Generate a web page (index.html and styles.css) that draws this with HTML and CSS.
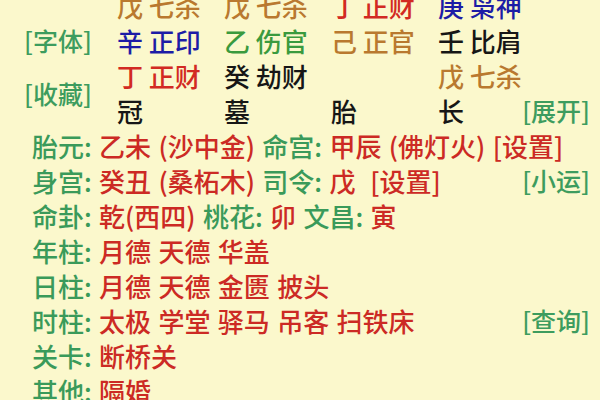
FILE: index.html
```html
<!DOCTYPE html>
<html lang="zh-CN">
<head>
<meta charset="utf-8">
<title>命盘</title>
<link rel="stylesheet" href="styles.css">
</head>
<body>
<div class="page">
  <div class="pillars">
    <div class="cell"></div>
    <div class="cell"><span class="brown">戊 七杀</span></div>
    <div class="cell"><span class="brown">戊 七杀</span></div>
    <div class="cell"><span class="red">丁 正财</span></div>
    <div class="cell"><span class="blue">庚 枭神</span></div>

    <div class="cell side"><span class="link">[字体]</span></div>
    <div class="cell"><span class="blue">辛 正印</span></div>
    <div class="cell"><span class="green">乙 伤官</span></div>
    <div class="cell"><span class="brown">己 正官</span></div>
    <div class="cell"><span class="black">壬 比肩</span></div>

    <div class="cell side tall"><span class="link">[收藏]</span></div>
    <div class="cell"><span class="red">丁 正财</span></div>
    <div class="cell"><span class="black">癸 劫财</span></div>
    <div class="cell"></div>
    <div class="cell"><span class="brown">戊 七杀</span></div>

    <div class="cell"><span class="black">冠</span></div>
    <div class="cell"><span class="black">墓</span></div>
    <div class="cell"><span class="black">胎</span></div>
    <div class="cell split"><span class="black">长</span><span class="link">[展开]</span></div>
  </div>

  <div class="info">
    <div class="line"><span><span class="key">胎元:</span> <span class="val">乙未 (沙中金)</span> <span class="key">命宫:</span> <span class="val">甲辰 (佛灯火)</span> <span class="val">[设置]</span></span></div>
    <div class="line"><span><span class="key">身宫:</span> <span class="val">癸丑 (桑柘木)</span> <span class="key">司令:</span> <span class="val">戊</span>&nbsp; <span class="val">[设置]</span></span><span class="link">[小运]</span></div>
    <div class="line"><span><span class="key">命卦:</span> <span class="val">乾(西四)</span> <span class="key">桃花:</span> <span class="val">卯</span> <span class="key">文昌:</span> <span class="val">寅</span></span></div>
    <div class="line"><span><span class="key">年柱:</span> <span class="val">月德 天德 华盖</span></span></div>
    <div class="line"><span><span class="key">日柱:</span> <span class="val">月德 天德 金匮 披头</span></span></div>
    <div class="line"><span><span class="key">时柱:</span> <span class="val">太极 学堂 驿马 吊客 扫铁床</span></span><span class="link">[查询]</span></div>
    <div class="line"><span><span class="key">关卡:</span> <span class="val">断桥关</span></span></div>
    <div class="line"><span><span class="key">其他:</span> <span class="val">隔婚</span></span></div>
  </div>
</div>
</body>
</html>
```

FILE: styles.css
```css
html, body {
  margin: 0;
  padding: 0;
}
body {
  width: 600px;
  height: 400px;
  overflow: hidden;
  background: #fbf8cc;
  font-family: "Noto Sans CJK SC", "Noto Sans", sans-serif;
  font-size: 26px;
  line-height: 35px;
  font-weight: 500;
}
.page {
  margin-top: -12px;
}
.pillars {
  display: grid;
  grid-template-columns: 117px 107px 107px 107px 1fr;
  grid-auto-rows: 35px;
  padding-right: 10px;
}
.cell {
  white-space: nowrap;
}
.side {
  grid-column: 1;
  padding-left: 24px;
  font-size: 25px;
}
.tall {
  grid-row: span 2;
  align-self: center;
}
.split {
  display: flex;
  justify-content: space-between;
}
.split .link {
  font-size: 25px;
}
.info {
  padding: 0 10px 0 32px;
  word-spacing: 1.5px;
}
.line {
  display: flex;
  justify-content: space-between;
  white-space: nowrap;
}
.line > .link {
  font-size: 25px;
}
.brown { color: #b9792f; }
.red { color: #d22a22; }
.blue { color: #1d1ca6; }
.green { color: #3a9a3e; }
.black { color: #161616; }
.link { color: #3d9c5e; }
.key { color: #3a9a5a; }
.val { color: #cc2a24; }
```
